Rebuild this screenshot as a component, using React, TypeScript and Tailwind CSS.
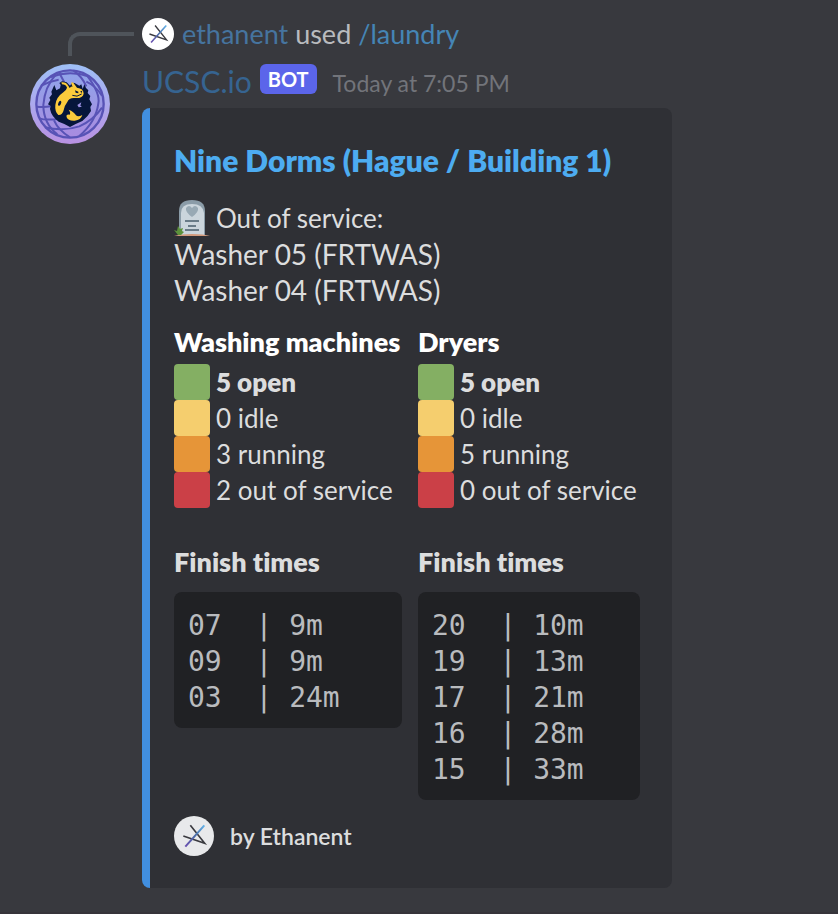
import React from "react";

type Status = { color: string; text: string; strong?: boolean };
type Field = { name: string; statuses: Status[]; times: string[][] };

const fields: Field[] = [
  {
    name: "Washing machines",
    statuses: [
      { color: "bg-[#84af63]", text: "5 open", strong: true },
      { color: "bg-[#f5ce6e]", text: "0 idle" },
      { color: "bg-[#e69538]", text: "3 running" },
      { color: "bg-[#cb4047]", text: "2 out of service" },
    ],
    times: [["07", "9m"], ["09", "9m"], ["03", "24m"]],
  },
  {
    name: "Dryers",
    statuses: [
      { color: "bg-[#84af63]", text: "5 open", strong: true },
      { color: "bg-[#f5ce6e]", text: "0 idle" },
      { color: "bg-[#e69538]", text: "5 running" },
      { color: "bg-[#cb4047]", text: "0 out of service" },
    ],
    times: [["20", "10m"], ["19", "13m"], ["17", "21m"], ["16", "28m"], ["15", "33m"]],
  },
];

function UserAvatar({ id, className, fill }: { id: string; className: string; fill: string }) {
  return (
    <svg viewBox="0 0 120 120" className={className} aria-hidden="true">
      <defs>
        <linearGradient id={id} gradientUnits="userSpaceOnUse" x1="34" y1="92" x2="92" y2="28">
          <stop offset="0" stopColor="#6a4fb0" />
          <stop offset="0.5" stopColor="#4a6aa5" />
          <stop offset="1" stopColor="#62b4ea" />
        </linearGradient>
      </defs>
      <circle cx="60" cy="60" r="60" fill={fill} />
      <path d="M49 28 L92 82 L28 60" fill="none" stroke="#3a3a40" strokeWidth="5" />
      <path d="M34 92 L91 28" stroke={`url(#${id})`} strokeWidth="6" />
    </svg>
  );
}

function BotAvatar() {
  return (
    <svg viewBox="30 27 240 240" className="size-20 shrink-0" role="img" aria-label="UCSC.io">
      <defs>
        <linearGradient id="rim" x1="0" y1="0" x2="0" y2="1">
          <stop offset="0" stopColor="#9fc0f7" />
          <stop offset="1" stopColor="#b991e2" />
        </linearGradient>
        <linearGradient id="globe" x1="0" y1="0" x2="0" y2="1">
          <stop offset="0" stopColor="#8fa5ea" />
          <stop offset="1" stopColor="#a98be0" />
        </linearGradient>
      </defs>
      <circle cx="150" cy="147" r="120" fill="url(#rim)" />
      <circle cx="150" cy="147" r="101" fill="url(#globe)" stroke="#5853b6" strokeWidth="7" />
      <g fill="none" stroke="#5853b6" strokeWidth="6">
        <path d="M92 66 Q150 44 207 65" />
        <path d="M64 92 Q90 78 116 74" />
        <path d="M199 80 Q226 92 246 122" />
        <path d="M50 155 Q72 158 92 154" />
        <path d="M57 190 Q80 197 118 191" />
        <path d="M75 217 Q130 230 178 214 Q220 196 246 158" />
        <path d="M108 58 Q74 95 70 150 Q70 205 112 238" />
        <path d="M116 50 L134 84 M160 46 Q186 64 199 94" />
        <path d="M203 64 Q241 115 235 145 Q228 200 178 243" />
        <path d="M102 196 Q115 225 150 247" />
      </g>
      <path
        d="M103 90 L109 106 L120 100 L122 90 L118 84 L126 79 L140 82 L150 92 L156 83 L164 84 L178 92 L184 88 L188 102 L193 88 L198 99 L205 106 L203 114 L211 123 L208 133 L216 148 L211 156 L213 168 Q204 185 187 198 Q168 206 150 216 Q134 206 116 200 Q94 184 90 162 L92 153 L84 148 L91 135 L88 128 L96 118 L94 110Z"
        fill="#06163b"
      />
      <path
        d="M124 82 Q138 80 145 92 L149 99 Q154 94 158 95 L154 87 Q152 80 160 83 L171 98 Q191 100 191 116 Q188 131 164 129 Q147 128 142 141 Q132 153 130 169 Q126 181 115 180 Q104 170 106 150 Q108 127 130 112 Q139 106 141 98 Q137 88 126 88 Z"
        fill="#fbcb3c"
      />
      <path
        d="M146 164 Q162 170 168 181 Q174 187 187 180 Q183 195 164 197 Q144 198 140 187 Q137 177 149 179 Q153 173 146 164Z"
        fill="#fbcb3c"
      />
      <path d="M157 121 Q171 128 185 117" fill="none" stroke="#06163b" strokeWidth="3" />
      <path d="M165 106 L175 110 L175 115 L167 113Z M181 109 L187 107 L184 115Z" fill="#06163b" />
      <ellipse cx="119" cy="145" rx="4" ry="8" transform="rotate(25 119 145)" fill="#06163b" />
      <path d="M172 150 L184 142 L181 152 L186 155 L176 157Z" fill="#9b90e2" />
    </svg>
  );
}

function Headstone() {
  return (
    <svg viewBox="0 0 36 36" className="size-9 shrink-0" aria-hidden="true">
      <path d="M5 35 V11 Q5 0 18 0 Q31 0 31 11 V35Z" fill="#8b9ca8" />
      <path d="M7 35 V13 Q7 4 18 4 Q29 4 30 13 V35Z" fill="#cbd5dc" />
      <path d="M18 17 Q11 12 12 8 Q15 4 18 8 Q21 4 24 8 Q25 12 18 17Z" fill="#98a9b4" />
      <path d="M11 21 H25 M14 26 H22 M11 30 H25" stroke="#697b87" strokeWidth="2" />
      <path d="M0 36 Q6 34 18 34 Q30 34 36 36Z" fill="#d39b7d" />
      <path d="M4 35 L0 30 L3 31 L4 26 L6 29 L9 28 L8 31 L10 32 L7 35Z" fill="#5c913b" />
    </svg>
  );
}

function FieldColumn({ field }: { field: Field }) {
  return (
    <section className="min-w-0">
      <h3 className="text-[27px] leading-9 font-extrabold whitespace-nowrap text-white">{field.name}</h3>
      <ul className="mt-1">
        {field.statuses.map((s) => (
          <li key={s.text} className={`flex items-center gap-[6px] whitespace-nowrap ${s.strong ? "font-extrabold" : ""}`}>
            <span className={`size-9 shrink-0 rounded-sm ${s.color}`} />
            {s.text}
          </li>
        ))}
      </ul>
      <h4 className="mt-9 text-[27px] leading-9 font-extrabold">Finish times</h4>
      <pre className="mt-3 rounded-lg bg-[#202124] px-[14px] pt-4 pb-3 font-['DejaVu_Sans_Mono',monospace] text-[28px] leading-9 text-[#b9bbbe]">
        {field.times.map(([id, left]) => `${id}  | ${left}`).join("\n")}
      </pre>
    </section>
  );
}

export default function App() {
  return (
    <main className="min-h-screen border-b-2 border-[#36343a] bg-[#38393e] pt-[18px] pr-4 font-[Lato,sans-serif] text-[26px] leading-9 text-[#dcddde] [font-variant-ligatures:none]">
      <div className="flex h-8 items-center gap-2 pl-[68px] text-[27px] whitespace-nowrap">
        <span className="mt-[14px] h-6 w-[66px] shrink-0 self-start rounded-tl-xl border-t-4 border-l-4 border-[#4f545a]" />
        <UserAvatar id="replyLine" className="size-8 shrink-0" fill="#ffffff" />
        <p className="text-[#b9bbbe]">
          <a href="#ethanent" className="text-[#46749f]">ethanent</a> used{" "}
          <a href="#laundry" className="text-[#4585b5]">/laundry</a>
        </p>
      </div>
      <article className="mt-[14px] flex items-start gap-8 pl-[30px]">
        <BotAvatar />
        <div className="min-w-0 flex-1">
          <header className="flex h-[30px] items-center whitespace-nowrap">
            <h1 className="pt-1 text-[30px] text-[#366491]">UCSC.io</h1>
            <span className="ml-2 flex h-[30px] items-center rounded-md bg-[#5b65ea] px-2 text-[20px] font-bold text-white">BOT</span>
            <time className="ml-4 pt-2 text-[23px] text-[#72747a]">Today at 7:05 PM</time>
          </header>
          <div className="mt-[14px] max-w-[530px] rounded-lg border-l-8 border-[#418fe0] bg-[#2f3035] py-8 pr-8 pl-6">
            <h2 className="text-[30px] leading-10 font-extrabold whitespace-nowrap text-[#4dacf1]">
              <a href="#nine-dorms">Nine Dorms (Hague / Building 1)</a>
            </h2>
            <div className="mt-5">
              <p className="flex items-center gap-[6px]">
                <Headstone />
                Out of service:
              </p>
              <p className="text-[28px] leading-9">Washer 05 (FRTWAS)</p>
              <p className="text-[28px] leading-9">Washer 04 (FRTWAS)</p>
            </div>
            <div className="mt-4 grid grid-cols-[228px_1fr] gap-4">
              {fields.map((f) => (
                <FieldColumn key={f.name} field={f} />
              ))}
            </div>
            <footer className="mt-4 flex items-center gap-4 text-[23px] font-semibold">
              <UserAvatar id="footerLine" className="size-10 shrink-0" fill="#e8e9eb" />
              by Ethanent
            </footer>
          </div>
        </div>
      </article>
    </main>
  );
}
